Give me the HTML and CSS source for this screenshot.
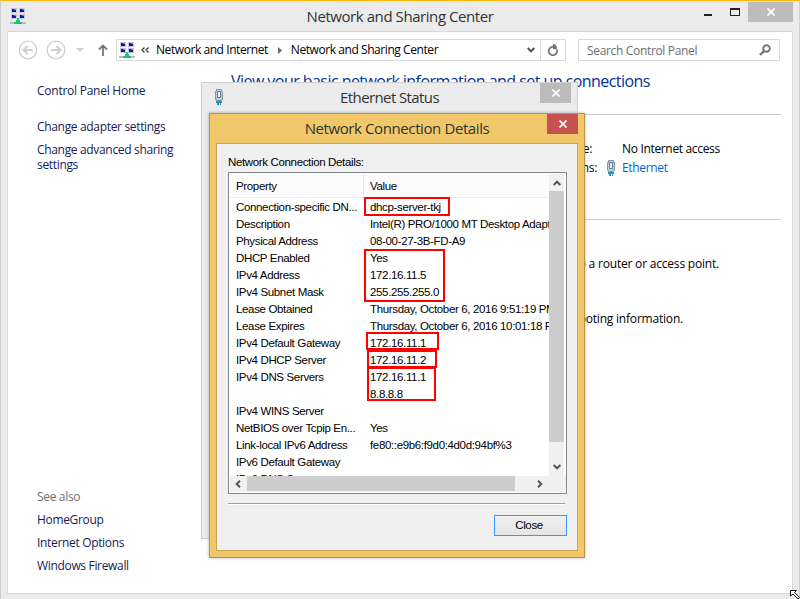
FILE: index.html
```html
<!DOCTYPE html>
<html lang="en">
<head>
    <meta charset="UTF-8">
    <title>Network and Sharing Center</title>
    <link rel="stylesheet" href="styles.css">
</head>
<body>
    <!-- Shared icons -->
    <svg class="defs" width="0" height="0">
        <symbol id="icon-network" viewBox="0 0 16 17">
            <path fill="#c3c7d3" d="M1 0h6v5H1zM9 0h6v5H9zM1 6h6v5H1zM9 6h6v5H9z"/>
            <path fill="#1212b8" d="M2 1h4v3H2zM10 1h4v3h-4zM2 7h4v3H2zM10 7h4v3h-4z"/>
            <path fill="#6f83ef" d="M4 1h2v1H4zM12 1h2v1h-2zM4 7h2v1H4zM12 7h2v1h-2z"/>
            <path fill="#b9bec4" d="M0 14h16v2H0z"/>
            <path fill="#12c47c" d="M7 10h2v2h1v2h2v2H4v-2h2v-2h1z"/>
        </symbol>
        <symbol id="icon-plug" viewBox="0 0 8 16">
            <path fill="#c4d0dc" stroke="#8195a9" d="M1.5.5h5v2h1v8h-1v1h-5v-1h-1v-8h1z"/>
            <path fill="#f4f7fa" stroke="#60768d" d="M2.5 2.500h3v6h-3z"/>
            <path fill="#2395bd" d="M1 12h6v2H6v2H5v-2H4v2H2v-2H1z"/>
        </symbol>
        <symbol id="icon-x" viewBox="0 0 8 8">
            <path fill="none" stroke="#fff" stroke-width="1.7" d="M.5.5l7 7M7.5.5l-7 7"/>
        </symbol>
        <symbol id="icon-chevron" viewBox="0 0 8 6">
            <path fill="none" stroke="#555" stroke-width="2" d="M.7 1L4 4.3 7.3 1"/>
        </symbol>
    </svg>

    <div class="window">
        <header class="titlebar">
            <svg class="app-icon" width="16" height="17"><use href="#icon-network"/></svg>
            <h1>Network and Sharing Center</h1>
            <div class="controls">
                <span class="minimize"></span>
                <span class="maximize"></span>
                <span class="close"><svg width="8" height="8"><use href="#icon-x"/></svg></span>
            </div>
        </header>

        <div class="content">
            <nav class="toolbar">
                <svg class="arrow back" width="20" height="20" viewBox="0 0 20 20" fill="none" stroke="#cfcfcf">
                    <circle cx="10" cy="10" r="8.8" stroke-width="1.3"/>
                    <path stroke-width="2" d="M5.5 10H15M9.5 6l-4 4 4 4"/>
                </svg>
                <svg class="arrow" width="20" height="20" viewBox="0 0 20 20" fill="none" stroke="#cfcfcf">
                    <circle cx="10" cy="10" r="8.8" stroke-width="1.3"/>
                    <path stroke-width="2" d="M14.5 10H5M10.5 6l4 4-4 4"/>
                </svg>
                <svg class="recent" width="8" height="4" viewBox="0 0 8 4"><path fill="#cfcfcf" d="M0 0h8L4 4z"/></svg>
                <svg class="up" width="10" height="12" viewBox="0 0 10 12" fill="none" stroke="#777" stroke-width="1.8"><path d="M5 12V1.5M1 5.500l4-4 4 4"/></svg>
                <div class="address">
                    <svg width="16" height="17"><use href="#icon-network"/></svg>
                    <svg class="more" width="8" height="6" viewBox="0 0 8 6" fill="none" stroke="#333" stroke-width="1.2"><path d="M3.500.5L1 3l2.500 2.500M7.500.5L5 3l2.500 2.500"/></svg>
                    <span class="crumb">Network and Internet</span>
                    <svg class="sep" width="4" height="7" viewBox="0 0 4 7"><path fill="#666" d="M0 0l4 3.500L0 7z"/></svg>
                    <span class="crumb">Network and Sharing Center</span>
                    <svg class="drop" width="8" height="6"><use href="#icon-chevron"/></svg>
                </div>
                <div class="refresh">
                    <svg width="12" height="12" viewBox="0 0 12 12"><path fill="none" stroke="#777" stroke-width="1.8" d="M9.800 5.500A4.200 4.200 0 1 1 5.500 2.800H7"/><path fill="#777" d="M6 0h1.500L10 2.700v2.500H6z"/></svg>
                </div>
                <div class="search">
                    <span>Search Control Panel</span>
                    <svg width="12" height="12" viewBox="0 0 12 12" fill="none" stroke="#777"><circle cx="7.5" cy="4.5" r="3.3" stroke-width="1.9"/><path stroke-width="2.400" d="M5 7L1 11"/></svg>
                </div>
            </nav>

            <div class="page">
                <aside class="sidebar">
                    <a class="home">Control Panel Home</a>
                    <a>Change adapter settings</a>
                    <a>Change advanced sharing settings</a>
                    <div class="see-also">
                        <p>See also</p>
                        <a>HomeGroup</a>
                        <a>Internet Options</a>
                        <a>Windows Firewall</a>
                    </div>
                </aside>
                <main class="main">
                    <h2>View your basic network information and set up connections</h2>
                    <section class="active-networks">
                        <div class="fact"><span class="label">Access type:</span><span>No Internet access</span></div>
                        <div class="fact"><span class="label">Connections:</span><svg class="plug" width="8" height="16"><use href="#icon-plug"/></svg><a>Ethernet</a></div>
                    </section>
                    <p class="hint setup">or set up a router or access point.</p>
                    <p class="hint">troubleshooting information.</p>
                </main>
            </div>
        </div>
    </div>

    <div class="status-dialog">
        <svg class="plug" width="8" height="16"><use href="#icon-plug"/></svg>
        <h3>Ethernet Status</h3>
        <span class="close"><svg width="8" height="8"><use href="#icon-x"/></svg></span>
    </div>

    <div class="details-dialog">
        <div class="dialog-title">
            <h3>Network Connection Details</h3>
            <span class="close red"><svg width="8" height="8"><use href="#icon-x"/></svg></span>
        </div>
        <div class="dialog-body">
            <p class="caption">Network Connection Details:</p>
            <div class="list">
                <div class="table">
                    <div class="row head"><span>Property</span><span>Value</span></div>
                    <div class="row"><span>Connection-specific DN...</span><span>dhcp-server-tkj</span></div>
                    <div class="row"><span>Description</span><span>Intel(R) PRO/1000 MT Desktop Adapter</span></div>
                    <div class="row"><span>Physical Address</span><span>08-00-27-3B-FD-A9</span></div>
                    <div class="row"><span>DHCP Enabled</span><span>Yes</span></div>
                    <div class="row"><span>IPv4 Address</span><span>172.16.11.5</span></div>
                    <div class="row"><span>IPv4 Subnet Mask</span><span>255.255.255.0</span></div>
                    <div class="row"><span>Lease Obtained</span><span>Thursday, October 6, 2016 9:51:19 PM</span></div>
                    <div class="row"><span>Lease Expires</span><span>Thursday, October 6, 2016 10:01:18 PM</span></div>
                    <div class="row"><span>IPv4 Default Gateway</span><span>172.16.11.1</span></div>
                    <div class="row"><span>IPv4 DHCP Server</span><span>172.16.11.2</span></div>
                    <div class="row"><span>IPv4 DNS Servers</span><span>172.16.11.1</span></div>
                    <div class="row"><span></span><span>8.8.8.8</span></div>
                    <div class="row"><span>IPv4 WINS Server</span><span></span></div>
                    <div class="row"><span>NetBIOS over Tcpip En...</span><span>Yes</span></div>
                    <div class="row"><span>Link-local IPv6 Address</span><span>fe80::e9b6:f9d0:4d0d:94bf%3</span></div>
                    <div class="row"><span>IPv6 Default Gateway</span><span></span></div>
                    <div class="row"><span>IPv6 DNS Server</span><span></span></div>
                </div>
                <div class="vscroll">
                    <svg class="flip" width="8" height="6"><use href="#icon-chevron"/></svg>
                    <div class="thumb"></div>
                    <svg width="8" height="6"><use href="#icon-chevron"/></svg>
                </div>
                <div class="hscroll">
                    <svg class="left" width="8" height="6"><use href="#icon-chevron"/></svg>
                    <div class="thumb"></div>
                    <svg class="right" width="8" height="6"><use href="#icon-chevron"/></svg>
                </div>
                <!-- Highlighted values -->
                <div class="mark mark-dns-suffix"></div>
                <div class="mark mark-address"></div>
                <div class="mark mark-gateway"></div>
                <div class="mark mark-dhcp"></div>
                <div class="mark mark-dns"></div>
            </div>
            <div class="divider"></div>
            <button class="close-button">Close</button>
        </div>
    </div>

    <svg class="cursor" width="10" height="9" viewBox="0 0 10 9"><path fill="#fff" stroke="#111" d="M.5 .5h6l-2 2 5 5-1.500 1.500-5-5-2.500 2z"/></svg>
</body>
</html>
```
FILE: styles.css
```css
* {
    box-sizing: border-box;
}
body {
    margin: 0;
    height: 599px;
    overflow: hidden;
    position: relative;
    font-family: "Open Sans", "Noto Sans", sans-serif;
    font-size: 12px;
    letter-spacing: -0.33px;
    color: #000;
}
h1, h2, h3, p {
    margin: 0;
    font-weight: normal;
}
svg {
    display: block;
    flex: none;
}
.defs {
    position: absolute;
}

/* Main window */
.window {
    height: 599px;
    display: flex;
    flex-direction: column;
    padding: 0 6px 5px;
    background: #ebebeb;
    border-top: 1px solid #ffb900;
    border-left: 1px solid #cfcfcf;
    border-right: 1px solid #cfcfcf;
}
.titlebar {
    height: 30px;
    flex: none;
    display: grid;
    grid-template-columns: 96px 1fr 96px;
}
.titlebar h1 {
    font-size: 15px;
    line-height: 30px;
    letter-spacing: -0.43px;
    text-align: center;
    color: #333;
}
.app-icon {
    margin: 7px 0 0 3px;
}
.controls {
    display: flex;
    align-items: flex-start;
}
.minimize {
    width: 8px;
    height: 2px;
    margin: 13px 18px 0 7px;
    background: #222;
    flex: none;
}
.maximize {
    width: 10px;
    height: 8px;
    margin: 7px 8px 0 0;
    border: 1px solid #222;
    border-top-width: 2px;
    flex: none;
}
.close {
    width: 31px;
    height: 20px;
    display: flex;
    align-items: center;
    justify-content: center;
    background: #bcbcbc;
    flex: none;
}
.controls .close {
    width: 45px;
    margin-top: 1px;
}
.close.red {
    background: #c75050;
}
.content {
    flex: 1;
    display: flex;
    flex-direction: column;
    background: #fff;
    border: 1px solid #d9d9d9;
}

/* Toolbar */
.toolbar {
    display: flex;
    align-items: center;
    height: 22px;
    margin: 7px 12px 0 10px;
}
.toolbar .back {
    margin-right: 8px;
}
.recent {
    margin: 0 14px 0 10px;
}
.up {
    margin-right: 8px;
}
.address {
    width: 425px;
    height: 22px;
    display: flex;
    align-items: center;
    padding: 0 5px 0 2px;
    border: 1px solid #d9d9d9;
}
.more {
    margin: 0 7px 0 6px;
}
.crumb {
    letter-spacing: -0.43px;
    position: relative;
    top: -1px;
}
.sep {
    margin: 0 9px 0 10px;
}
.drop {
    margin-left: auto;
}
.refresh {
    width: 25px;
    height: 22px;
    display: flex;
    align-items: center;
    justify-content: center;
    border: 1px solid #d9d9d9;
    border-left: none;
}
.search {
    flex: 1;
    height: 22px;
    margin-left: 12px;
    display: flex;
    align-items: center;
    justify-content: space-between;
    padding: 0 8px;
    color: #6d6d6d;
    border: 1px solid #d9d9d9;
}

/* Page */
.page {
    flex: 1;
    display: flex;
}
.sidebar {
    width: 223px;
    display: flex;
    flex-direction: column;
    padding: 22px 40px 20px 29px;
    line-height: 15px;
    color: #151c55;
}
.sidebar a {
    margin-bottom: 8px;
}
.sidebar .home {
    margin-bottom: 21px;
    letter-spacing: -0.25px;
}
.see-also {
    display: flex;
    flex-direction: column;
    margin-top: auto;
    margin-bottom: -8px;
}
.see-also p {
    margin-bottom: 8px;
    color: #6d6d6d;
}
.main {
    flex: 1;
    padding: 9px 11px 0 0;
}
.main h2 {
    font-size: 16px;
    line-height: 22px;
    letter-spacing: -0.55px;
    color: #003399;
    white-space: nowrap;
}
.active-networks {
    height: 106px;
    margin-top: 22px;
    padding-top: 24px;
    border-top: 1px solid #ccc;
    border-bottom: 1px solid #ccc;
}
.fact {
    display: flex;
    align-items: center;
    height: 19px;
}
.fact .label {
    width: 361px;
    text-align: right;
    margin-right: 30px;
}
.fact:nth-child(2) .label {
    width: 366px;
    margin-right: 25px;
}
.fact .plug {
    margin: 0 7px 0 -15px;
}
.fact a {
    color: #0066cc;
}
.hint {
    margin-left: 300px;
    width: 188px;
    display: flex;
    justify-content: flex-end;
    white-space: nowrap;
    line-height: 15px;
    letter-spacing: -0.2px;
}
.hint.setup {
    margin-top: 36px;
    margin-bottom: 40px;
}
.hint:last-child {
    width: 152px;
}

/* Ethernet Status window */
.status-dialog {
    position: absolute;
    left: 201px;
    top: 82px;
    width: 377px;
    height: 457px;
    display: grid;
    grid-template-columns: 31px 1fr 31px;
    align-items: start;
    padding: 0 6px;
    background: #ebebeb;
    border: 1px solid #cfcfcf;
}
.status-dialog .plug {
    margin: 6px 0 0 7px;
}
.status-dialog h3,
.dialog-title h3 {
    font-size: 15px;
    line-height: 28px;
    letter-spacing: -0.4px;
    text-align: center;
    color: #333;
}
.status-dialog h3 {
    letter-spacing: -0.6px;
}

/* Network Connection Details window */
.details-dialog {
    position: absolute;
    left: 209px;
    top: 113px;
    width: 376px;
    height: 445px;
    display: flex;
    flex-direction: column;
    padding: 0 6px 6px;
    background: #f0c869;
    border: 1px solid #b8954a;
    box-shadow: 0 0 3px rgba(0, 0, 0, 0.3);
}
.dialog-title {
    height: 29px;
    flex: none;
    display: grid;
    grid-template-columns: 1fr 31px;
    padding-left: 31px;
}
.dialog-body {
    flex: 1;
    display: flex;
    flex-direction: column;
    padding: 10px 10px 0 11px;
    background: #f0f0f0;
    border: 1px solid #c9a656;
    font-family: "Liberation Sans", Arial, sans-serif;
    font-size: 11.5px;
    letter-spacing: -0.35px;
}
.caption {
    line-height: 16px;
    margin-bottom: 2px;
}
.list {
    position: relative;
    height: 322px;
    display: grid;
    grid-template-columns: 319px 17px;
    grid-template-rows: 302px 16px;
    padding: 1px;
    background: #fff;
    border: 1px solid #828790;
}
.table {
    overflow: hidden;
}
.row {
    display: grid;
    grid-template-columns: 134px 185px;
    height: 17px;
    line-height: 19px;
    white-space: nowrap;
}
.row span {
    padding-left: 6px;
}
.row.head {
    height: 24px;
    line-height: 24px;
    background: #fcfcfc;
    border-bottom: 1px solid #e5eff8;
}
.row.head span:first-child {
    border-right: 1px solid #e0ebf5;
}
.vscroll {
    display: flex;
    flex-direction: column;
    align-items: center;
    margin-right: 2px;
    padding: 6px 0 5px;
    background: #f0f0f0;
}
.vscroll .thumb {
    width: 15px;
    height: 251px;
    margin: 5px 0 22px;
    background: #cdcdcd;
}
.flip {
    transform: rotate(180deg);
}
.hscroll {
    grid-column: 1 / 3;
    display: flex;
    align-items: center;
    padding: 0 0 1px 4px;
    background: #f0f0f0;
}
.hscroll .thumb {
    width: 268px;
    height: 15px;
    margin: 0 21px 0 5px;
    background: #cdcdcd;
}
.left {
    transform: rotate(90deg);
}
.right {
    transform: rotate(-90deg);
}
.divider {
    height: 2px;
    margin: 9px 2px 10px 0;
    border-top: 1px solid #a0a0a0;
    background: #fff;
}
.close-button {
    align-self: flex-end;
    width: 73px;
    height: 21px;
    padding: 0 3px 1px 0;
    font: inherit;
    letter-spacing: inherit;
    color: #000;
    background: linear-gradient(#f0f0f0, #e5e5e5);
    border: 1px solid #3399ff;
}

/* Red boxes, measured from the list frame */
.mark {
    position: absolute;
    border: 2px solid #ff0000;
}
.mark-dns-suffix {
    left: 135px;
    top: 24px;
    width: 86px;
    height: 19px;
}
.mark-address {
    left: 135px;
    top: 76px;
    width: 81px;
    height: 53px;
}
.mark-gateway {
    left: 137px;
    top: 159px;
    width: 73px;
    height: 18px;
}
.mark-dhcp {
    left: 138px;
    top: 177px;
    width: 70px;
    height: 18px;
}
.mark-dns {
    left: 138px;
    top: 194px;
    width: 69px;
    height: 34px;
}

.cursor {
    position: absolute;
    right: 0;
    bottom: 0;
}
```
